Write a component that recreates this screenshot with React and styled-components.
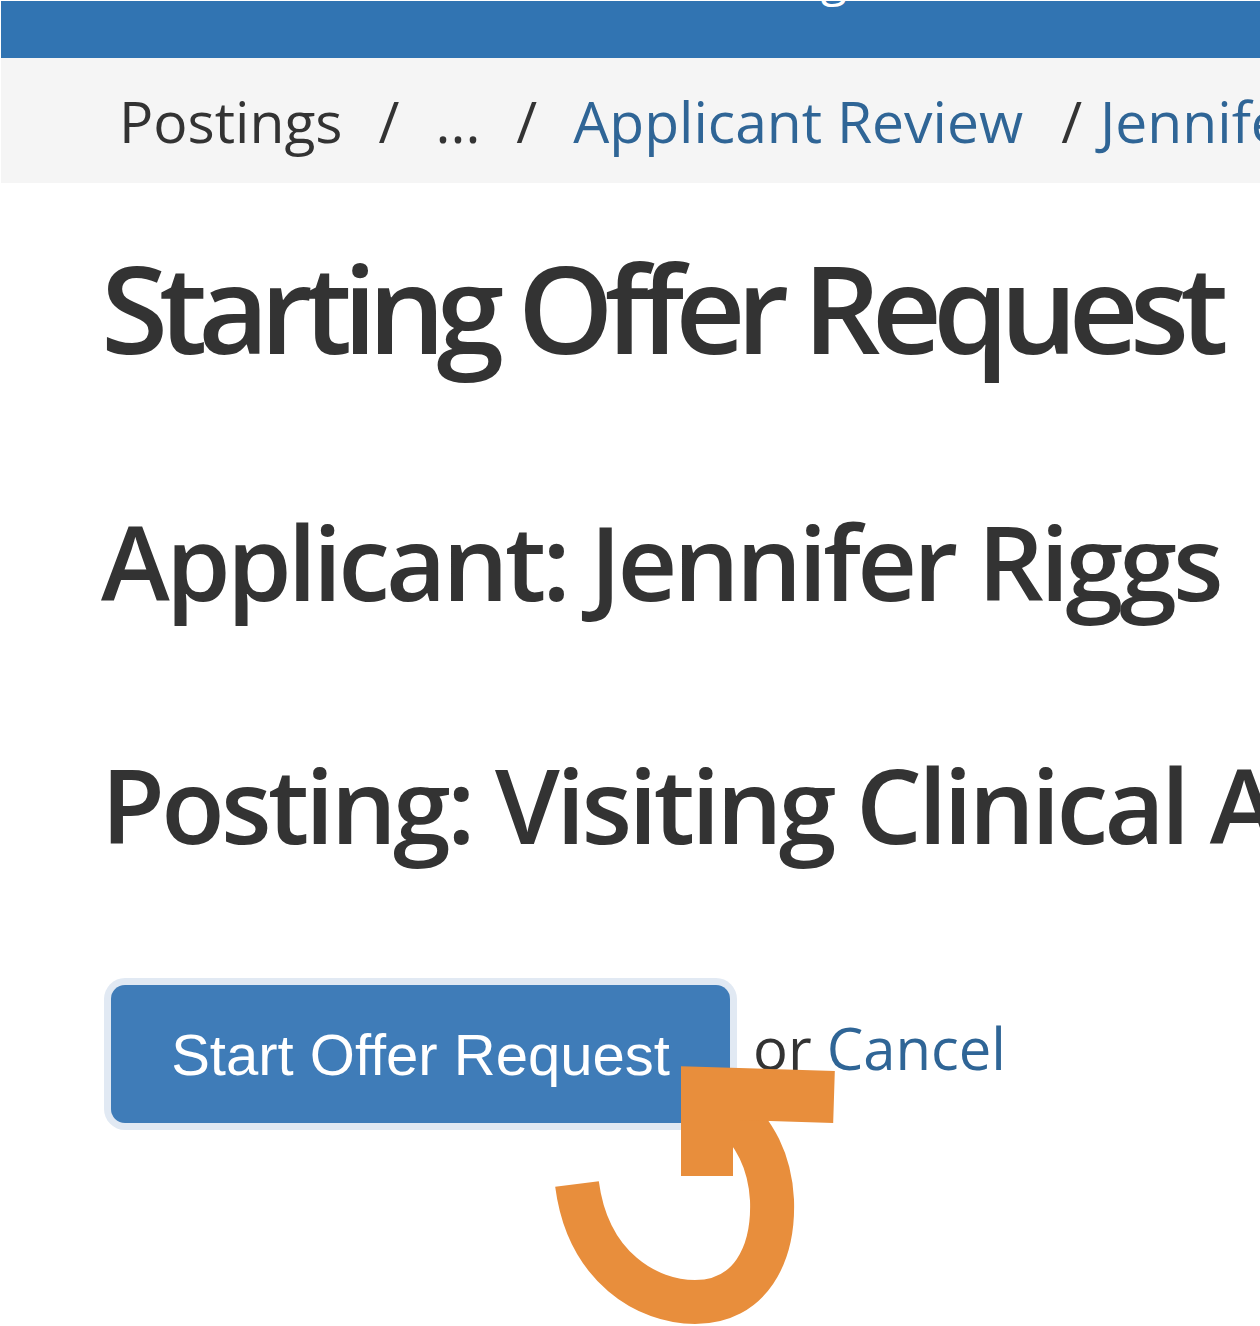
import React from "react";
import styled, { createGlobalStyle } from "styled-components";

const GlobalStyle = createGlobalStyle`
  html, body {
    margin: 0;
    background: #ffffff;
    overflow: hidden;
  }
  body {
    padding: 1px 0 0 1px;
    font-family: "Open Sans", "Liberation Sans", sans-serif;
    color: #333333;
  }
`;

const Page = styled.div`
  position: relative;
  width: 1259px;
  height: 1325px;
  overflow: hidden;
`;

const TopBar = styled.header`
  height: 57px;
  background: #3174b2;
  overflow: hidden;
  display: flex;
  align-items: flex-start;
  padding-left: 711px;
`;

const BrandTitle = styled.span`
  margin-top: -47px;
  font-size: 48px;
  line-height: 1;
  color: #ffffff;
  white-space: nowrap;
`;

const Crumbs = styled.nav`
  height: 125px;
  box-sizing: border-box;
  background: #f5f5f5;
  padding: 24px 0 0 118px;
  display: flex;
  align-items: flex-start;
  font-size: 57px;
  line-height: 78px;
  white-space: nowrap;
`;

const Crumb = styled.span`
  color: ${p => (p.$link ? "#2f6596" : "#333333")};
`;

const Slash = styled.span`
  color: #333333;
  margin: ${p => (p.$tight ? "0 18px 0 38px" : "0 36px")};
`;

const Main = styled.main`
  display: flex;
  flex-direction: column;
  align-items: flex-start;
  padding-left: 100px;
`;

const Title = styled.h1`
  margin: 63px 0 0;
  font-size: 122px;
  font-weight: 600;
  line-height: 1;
  letter-spacing: -9px;
  white-space: nowrap;
  color: #333333;
`;

const SubTitle = styled.h2`
  margin: ${p => p.$gap}px 0 0;
  font-size: 104px;
  font-weight: 600;
  line-height: 1;
  letter-spacing: ${p => p.$track}px;
  white-space: nowrap;
  color: #333333;
`;

const Actions = styled.div`
  margin: 129px 0 0 10px;
  display: flex;
  align-items: center;
`;

const PrimaryButton = styled.button`
  height: 138px;
  width: 619px;
  border: none;
  border-radius: 14px;
  background: #3f7cb8;
  box-shadow: 0 0 0 7px #e1e9f3;
  color: #ffffff;
  font-family: "Liberation Sans", Arial, sans-serif;
  font-size: 58px;
  display: flex;
  align-items: center;
  justify-content: center;
  padding: 0;
`;

const OrText = styled.span`
  margin: 0 0 12px 23px;
  font-size: 58px;
  line-height: 1;
  color: #333333;
`;

const CancelLink = styled.a`
  color: #2f6596;
  text-decoration: none;
`;

const Annotation = styled.svg`
  position: absolute;
  left: 0;
  top: 0;
  pointer-events: none;
`;

export default function App() {
  return (
    <>
      <GlobalStyle />
      <Page>
        <TopBar>
          <BrandTitle>Hiring</BrandTitle>
        </TopBar>
        <Crumbs>
          <Crumb>Postings</Crumb>
          <Slash>/</Slash>
          <Crumb>...</Crumb>
          <Slash>/</Slash>
          <Crumb $link>Applicant Review</Crumb>
          <Slash $tight>/</Slash>
          <Crumb $link>Jennifer Riggs</Crumb>
        </Crumbs>
        <Main>
          <Title>Starting Offer Request</Title>
          <SubTitle $gap={141} $track={-3.8}>Applicant: Jennifer Riggs</SubTitle>
          <SubTitle $gap={139} $track={-3.7}>Posting: Visiting Clinical Assistant Professor</SubTitle>
          <Actions>
            <PrimaryButton>Start Offer Request</PrimaryButton>
            <OrText>
              or <CancelLink href="#">Cancel</CancelLink>
            </OrText>
          </Actions>
        </Main>
        <Annotation width="1259" height="1325" viewBox="1 1 1259 1325">
          <g fill="none" stroke="#e88e3c" strokeLinejoin="miter">
            <path
              d="M 577 1184 C 588 1268, 648 1302, 695 1302 C 750 1302, 774 1255, 772 1200 C 770 1160, 755 1135, 728 1105"
              strokeWidth="44"
            />
            <path d="M 707 1176 L 707 1093 L 834 1097" strokeWidth="52" />
          </g>
        </Annotation>
      </Page>
    </>
  );
}
